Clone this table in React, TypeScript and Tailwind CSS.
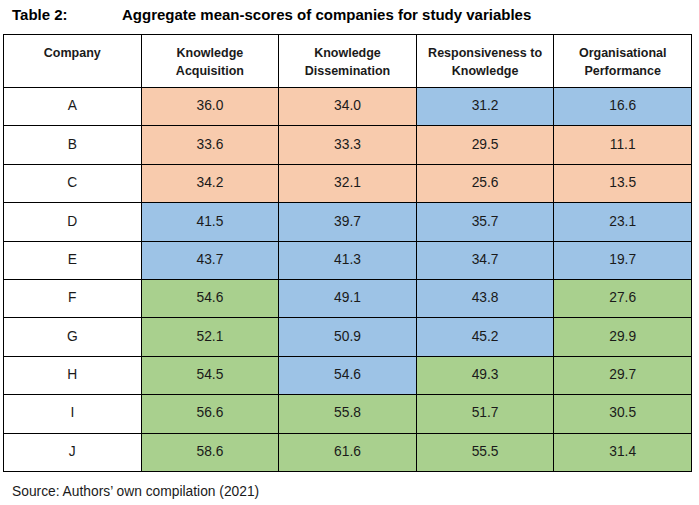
const P = "bg-[#f8cbad]";
const B = "bg-[#9dc3e6]";
const G = "bg-[#a9d08e]";

const rows: { co: string; cells: [string, string][] }[] = [
  { co: "A", cells: [["36.0", P], ["34.0", P], ["31.2", B], ["16.6", B]] },
  { co: "B", cells: [["33.6", P], ["33.3", P], ["29.5", P], ["11.1", P]] },
  { co: "C", cells: [["34.2", P], ["32.1", P], ["25.6", P], ["13.5", P]] },
  { co: "D", cells: [["41.5", B], ["39.7", B], ["35.7", B], ["23.1", B]] },
  { co: "E", cells: [["43.7", B], ["41.3", B], ["34.7", B], ["19.7", B]] },
  { co: "F", cells: [["54.6", G], ["49.1", B], ["43.8", B], ["27.6", G]] },
  { co: "G", cells: [["52.1", G], ["50.9", B], ["45.2", B], ["29.9", G]] },
  { co: "H", cells: [["54.5", G], ["54.6", B], ["49.3", G], ["29.7", G]] },
  { co: "I", cells: [["56.6", G], ["55.8", G], ["51.7", G], ["30.5", G]] },
  { co: "J", cells: [["58.6", G], ["61.6", G], ["55.5", G], ["31.4", G]] },
];

const heads = [
  ["Company"],
  ["Knowledge", "Acquisition"],
  ["Knowledge", "Dissemination"],
  ["Responsiveness to", "Knowledge"],
  ["Organisational", "Performance"],
];

export default function App() {
  return (
    <div className="w-[699px] h-[505px] bg-white font-['Liberation_Sans',Arial,sans-serif] text-[#1a1a1a]">
      <div className="flex h-[34px] items-center pl-[12px] pb-[3px] text-[15px] font-bold text-black">
        <span className="w-[110px]">Table 2:</span>
        <span>Aggregate mean-scores of companies for study variables</span>
      </div>
      <table className="ml-[3px] w-[689px] table-fixed border-collapse">
        <thead>
          <tr className="h-[53px]">
            {heads.map((h, i) => (
              <th
                key={i}
                className="border border-black bg-white align-top pt-[9px] text-[12.5px] font-bold leading-[18px] text-[#1a1a1a]"
              >
                {h.map((l) => (
                  <div key={l}>{l}</div>
                ))}
              </th>
            ))}
          </tr>
        </thead>
        <tbody>
          {rows.map((r) => (
            <tr key={r.co} className="h-[38.4px]">
              <td className="border border-black bg-white text-center text-[13.8px]">{r.co}</td>
              {r.cells.map(([v, c], i) => (
                <td key={i} className={`border border-black text-center text-[13.8px] ${c}`}>
                  {v}
                </td>
              ))}
            </tr>
          ))}
        </tbody>
      </table>
      <div className="pl-[12px] pt-[10px] text-[13.8px] text-[#1a1a1a]">
        Source: Authors’ own compilation (2021)
      </div>
    </div>
  );
}
